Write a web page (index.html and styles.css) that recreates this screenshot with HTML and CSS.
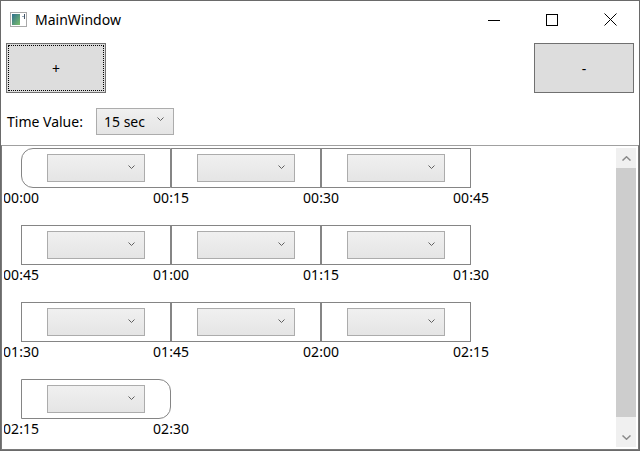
FILE: index.html
```html
<!DOCTYPE html>
<html lang="en">
<head>
    <meta charset="UTF-8">
    <title>MainWindow</title>
    <link rel="stylesheet" href="styles.css">
</head>
<body>
<div class="window">
    <div class="titlebar">
        <svg class="app-icon" width="17" height="15" viewBox="0 0 17 15">
            <rect x="0.5" y="0.5" width="16" height="14" fill="#fff" stroke="#a9a9a9"/>
            <defs>
                <linearGradient id="g" x1="0" y1="0" x2="1" y2="1">
                    <stop offset="0" stop-color="#2f6f8f"/>
                    <stop offset="1" stop-color="#7bbf6a"/>
                </linearGradient>
            </defs>
            <rect x="2" y="2" width="8" height="11" fill="url(#g)"/>
            <rect x="12" y="4" width="3" height="1" fill="#9ab"/>
            <rect x="14" y="2" width="1" height="5" fill="#456"/>
        </svg>
        <span class="title">MainWindow</span>
        <div class="caption-buttons">
            <div class="caption">
                <svg width="12" height="12" viewBox="0 0 12 12"><line x1="0" y1="6.5" x2="12" y2="6.5" stroke="#000"/></svg>
            </div>
            <div class="caption">
                <svg width="12" height="12" viewBox="0 0 12 12"><rect x="0.5" y="0.5" width="11" height="11" fill="none" stroke="#000"/></svg>
            </div>
            <div class="caption">
                <svg width="13" height="13" viewBox="0 0 13 13"><path d="M0.5 0.5 L12.5 12.5 M12.5 0.5 L0.5 12.5" stroke="#000" fill="none"/></svg>
            </div>
        </div>
    </div>

    <div class="toolbar">
        <div class="btn"><span class="focus">+</span></div>
        <div class="btn"><span class="plain">-</span></div>
    </div>

    <div class="time-row">
        <span class="time-label">Time Value:</span>
        <div class="combo small">
            <span class="combo-text">15 sec</span>
            <svg class="chevron" width="7" height="4" viewBox="0 0 7 4"><polyline points="0.5,0.5 3.5,3.5 6.5,0.5" fill="none" stroke="#606060"/></svg>
        </div>
    </div>

    <div class="panel">
        <div class="timeline">
            <div class="row">
                <div class="cells">
                    <div class="cell first"><div class="combo"><svg class="chevron" width="7" height="4" viewBox="0 0 7 4"><polyline points="0.5,0.5 3.5,3.5 6.5,0.5" fill="none" stroke="#606060"/></svg></div></div>
                    <div class="cell"><div class="combo"><svg class="chevron" width="7" height="4" viewBox="0 0 7 4"><polyline points="0.5,0.5 3.5,3.5 6.5,0.5" fill="none" stroke="#606060"/></svg></div></div>
                    <div class="cell"><div class="combo"><svg class="chevron" width="7" height="4" viewBox="0 0 7 4"><polyline points="0.5,0.5 3.5,3.5 6.5,0.5" fill="none" stroke="#606060"/></svg></div></div>
                </div>
                <div class="ticks">
                    <span class="tick"><span>00:00</span></span>
                    <span class="tick"><span>00:15</span></span>
                    <span class="tick"><span>00:30</span></span>
                    <span class="tick"><span>00:45</span></span>
                </div>
            </div>
            <div class="row">
                <div class="cells">
                    <div class="cell"><div class="combo"><svg class="chevron" width="7" height="4" viewBox="0 0 7 4"><polyline points="0.5,0.5 3.5,3.5 6.5,0.5" fill="none" stroke="#606060"/></svg></div></div>
                    <div class="cell"><div class="combo"><svg class="chevron" width="7" height="4" viewBox="0 0 7 4"><polyline points="0.5,0.5 3.5,3.5 6.5,0.5" fill="none" stroke="#606060"/></svg></div></div>
                    <div class="cell"><div class="combo"><svg class="chevron" width="7" height="4" viewBox="0 0 7 4"><polyline points="0.5,0.5 3.5,3.5 6.5,0.5" fill="none" stroke="#606060"/></svg></div></div>
                </div>
                <div class="ticks">
                    <span class="tick"><span>00:45</span></span>
                    <span class="tick"><span>01:00</span></span>
                    <span class="tick"><span>01:15</span></span>
                    <span class="tick"><span>01:30</span></span>
                </div>
            </div>
            <div class="row">
                <div class="cells">
                    <div class="cell"><div class="combo"><svg class="chevron" width="7" height="4" viewBox="0 0 7 4"><polyline points="0.5,0.5 3.5,3.5 6.5,0.5" fill="none" stroke="#606060"/></svg></div></div>
                    <div class="cell"><div class="combo"><svg class="chevron" width="7" height="4" viewBox="0 0 7 4"><polyline points="0.5,0.5 3.5,3.5 6.5,0.5" fill="none" stroke="#606060"/></svg></div></div>
                    <div class="cell"><div class="combo"><svg class="chevron" width="7" height="4" viewBox="0 0 7 4"><polyline points="0.5,0.5 3.5,3.5 6.5,0.5" fill="none" stroke="#606060"/></svg></div></div>
                </div>
                <div class="ticks">
                    <span class="tick"><span>01:30</span></span>
                    <span class="tick"><span>01:45</span></span>
                    <span class="tick"><span>02:00</span></span>
                    <span class="tick"><span>02:15</span></span>
                </div>
            </div>
            <div class="row">
                <div class="cells">
                    <div class="cell last"><div class="combo"><svg class="chevron" width="7" height="4" viewBox="0 0 7 4"><polyline points="0.5,0.5 3.5,3.5 6.5,0.5" fill="none" stroke="#606060"/></svg></div></div>
                </div>
                <div class="ticks">
                    <span class="tick"><span>02:15</span></span>
                    <span class="tick"><span>02:30</span></span>
                </div>
            </div>
        </div>

        <div class="scrollbar">
            <div class="arrow">
                <svg width="9" height="5" viewBox="0 0 9 5"><polyline points="0.5,4.5 4.5,0.8 8.5,4.5" fill="none" stroke="#8a8a8a" stroke-width="1.5"/></svg>
            </div>
            <div class="track">
                <div class="thumb"></div>
            </div>
            <div class="arrow">
                <svg width="9" height="5" viewBox="0 0 9 5"><polyline points="0.5,0.5 4.5,4.2 8.5,0.5" fill="none" stroke="#8a8a8a" stroke-width="1.5"/></svg>
            </div>
        </div>
    </div>
</div>
</body>
</html>
```

FILE: styles.css
```css
body {
    margin: 0;
    font-family: 'Noto Sans', 'Open Sans', sans-serif;
    font-size: 14px;
    color: #000;
    background: #fff;
}
.window {
    width: 640px;
    height: 451px;
    box-sizing: border-box;
    border: 1px solid #6a6a6a;
    display: flex;
    flex-direction: column;
    background: #fff;
}
/* title bar */
.titlebar {
    height: 37px;
    display: flex;
    align-items: center;
    flex-shrink: 0;
}
.app-icon {
    margin-left: 9px;
    margin-top: 0;
}
.title {
    margin-left: 8px;
    font-size: 14px;
    line-height: 20px;
}
.caption-buttons {
    margin-left: auto;
    display: flex;
    height: 100%;
}
.caption {
    width: 58px;
    display: flex;
    align-items: center;
    justify-content: center;
}
/* top buttons */
.toolbar {
    display: flex;
    justify-content: space-between;
    padding: 5px;
    flex-shrink: 0;
}
.btn {
    width: 100px;
    height: 50px;
    box-sizing: border-box;
    border: 1px solid #707070;
    background: #dddddd;
    padding: 1px;
    display: flex;
}
.btn span {
    flex: 1;
    display: flex;
    align-items: center;
    justify-content: center;
    font-size: 14px;
}
.btn .focus {
    border: 1px dotted #000;
}
.btn .plain {
    border: 1px solid transparent;
}
/* time value row */
.time-row {
    display: flex;
    align-items: center;
    padding: 10px 5px 10px 6px;
    flex-shrink: 0;
}
.time-label {
    width: 89px;
}
.combo {
    width: 98px;
    height: 28px;
    box-sizing: border-box;
    border: 1px solid #acacac;
    background: linear-gradient(#f0f0f0, #e5e5e5);
    display: flex;
    align-items: center;
    justify-content: flex-end;
    padding-right: 9px;
    flex-shrink: 0;
}
.combo.small {
    width: 78px;
    height: 27px;
    justify-content: space-between;
    padding-left: 7px;
}
.combo-text {
    line-height: 20px;
    font-size: 14px;
}
.chevron {
    margin-top: -3px;
}
.combo.small .chevron {
    margin-top: -5px;
}
/* timeline panel */
.panel {
    flex: 1;
    min-height: 0;
    display: flex;
    border: 1px solid #a0a0a0;
    border-left-color: #7a7a7a;
    border-bottom-color: #7a7a7a;
    border-right-color: #7a7a7a;
    padding: 2px;
}
.timeline {
    flex: 1;
    overflow: hidden;
}
.row {
    margin-bottom: 18px;
}
.cells {
    display: flex;
    margin-left: 17px;
}
.cell {
    width: 150px;
    height: 40px;
    box-sizing: border-box;
    border: 1px solid #858585;
    display: flex;
    align-items: center;
    justify-content: center;
}
.cell.first {
    border-radius: 12px 0 0 12px;
}
.cell.last {
    border-radius: 0 12px 12px 0;
}
.ticks {
    display: flex;
    gap: 150px;
    margin-left: 17px;
    height: 19px;
}
.tick {
    width: 0;
    display: flex;
    justify-content: center;
    white-space: nowrap;
    line-height: 19px;
}
/* scrollbar */
.scrollbar {
    width: 20px;
    display: flex;
    flex-direction: column;
    background: #f0f0f0;
}
.arrow {
    height: 20px;
    display: flex;
    align-items: center;
    justify-content: center;
    flex-shrink: 0;
}
.track {
    flex: 1;
}
.thumb {
    height: 249px;
    background: #cdcdcd;
}
```
